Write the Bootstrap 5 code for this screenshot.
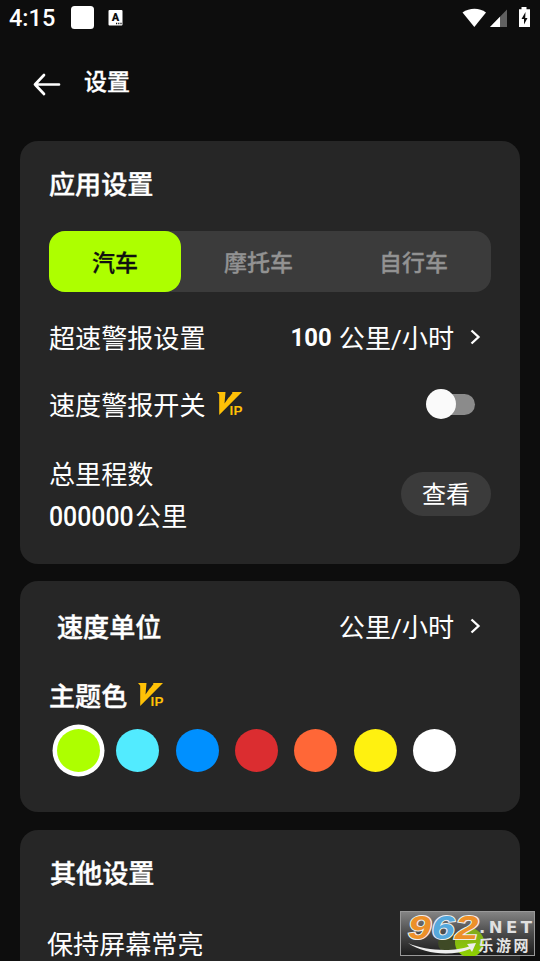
<!DOCTYPE html>
<html lang="zh-CN" data-bs-theme="dark">
<head>
<meta charset="utf-8">
<meta name="viewport" content="width=device-width, initial-scale=1">
<title>设置</title>
<link href="https://cdn.jsdelivr.net/npm/bootstrap@5.3.0/dist/css/bootstrap.min.css" rel="stylesheet">
<style>
body{width:540px;height:961px;background:#0d0d0d;color:#fff;font-family:"Noto Sans CJK SC",sans-serif;font-size:26.1px;line-height:30px}
.screen{width:540px;height:961px}
.statusbar{height:36px;padding:0 9px;flex:none}
.clock{font:500 23.5px/36px Roboto,sans-serif;width:62px}
.titlebar{height:105px;padding:28px 0 0 33px;flex:none}
.page-name{font-size:23px;font-weight:500;line-height:28px;margin:2px 0 0 23px;-webkit-text-stroke:.3px}
.panel{background:#262626;border-radius:18px;margin:0 20px 17px;padding:0 29px;flex:none}
.heavy{font-size:26.1px;line-height:30px;font-weight:500;-webkit-text-stroke:.4px}
.panel-app{height:423px}.panel-unit{height:231px;margin-bottom:18px}.panel-other{height:150px}
.panel-title{height:90px;padding-top:27px}
.vehicles{height:61px;background:#3b3b3b;border-radius:16px;font-size:23px}
.vehicles button{border:0;background:none;color:#929292;flex:1;border-radius:16px;padding:0 0 2px;line-height:30px;font-weight:500;-webkit-text-stroke:.3px}
.vehicles .chosen{background:#adff00;color:#101010;flex:0 0 132px}
.limit-row{height:60px;margin-top:15px}
.alarm-row{height:74px}
.total-row{height:88px;margin-top:9px}
.num{font-family:Roboto,sans-serif;line-height:20px}
.odo{display:inline-block;font-weight:500;font-size:27px;transform:scaleX(.92);transform-origin:left;margin-right:-6px}
.limit-num{font-weight:700;font-size:26.5px;transform:scaleX(.9);transform-origin:right;margin-right:7.5px}
.slash{font-family:Roboto,sans-serif;line-height:20px}
.chev{margin:0 10px 0 16px}
.vip{margin-left:11px}
.switch-off{width:49px;height:31px;margin-right:16px;position:relative}
.switch-off::before{content:"";position:absolute;left:8px;top:5px;width:41px;height:21px;border-radius:11px;background:#8b8b8b}
.switch-off::after{content:"";position:absolute;left:0;top:0;width:30px;height:30px;border-radius:50%;background:#fafafa}
.view-btn{width:90px;height:44px;border:0;background:#3b3b3b;color:#fff;font-size:24px;line-height:42px;padding:0 0 2px}
.unit-row{height:89px;padding-left:8px}
.theme-row{height:49px}
.swatches{gap:16.3px;padding-left:8.200px;height:62px}
.dot{width:43px;height:43px;border-radius:50%;flex:none}
.picked{box-shadow:0 0 0 4.5px #fff}
.c-lime{background:#adff00}.c-cyan{background:#52ebff}.c-blue{background:#0090ff}.c-red{background:#db2d30}.c-orange{background:#ff6737}.c-yellow{background:#fff110}.c-white{background:#fff}
.other-title{height:98px;padding:27px 0 0 1px}
.awake{margin-left:-2px}
.stamp{left:400px;top:911px;width:135px;height:45px}
</style>
<script src="https://cdn.jsdelivr.net/npm/bootstrap@5.3.0/dist/js/bootstrap.bundle.min.js"></script>
</head>
<body class="overflow-hidden">
<svg width="0" height="0" class="position-absolute">
<symbol id="vip" viewBox="0 0 26 24"><path d="M0 0H8.500L7.500 11.500L15.500 0H25L2.200 23V2.500Z" fill="#ffc107"/><path d="M15.500 1L14 0L11.500 6Z" fill="#262626"/><text x="12.4" y="22.700" font-family="Liberation Sans,sans-serif" font-size="13.500" font-weight="700" fill="#ffc107" textLength="13">IP</text></symbol>
</svg>
<main class="screen d-flex flex-column position-relative overflow-hidden">
<div class="statusbar d-flex align-items-center">
<span class="clock">4:15</span>
<svg width="54" height="24" viewBox="0 0 54 24"><rect width="23" height="23" rx="3.5" fill="#fff"/><rect x="37.500" y="4" width="14" height="15.500" rx="1" fill="#fff"/><text x="44.500" y="15" text-anchor="middle" font-family="Roboto,sans-serif" font-size="11" font-weight="900" fill="#0d0d0d">A</text><path d="M45 17.500h6" stroke="#0d0d0d" stroke-width="1.300" stroke-dasharray="1.200 1"/></svg>
<svg class="ms-auto" width="69" height="24" viewBox="462 6 69 24"><path d="M462.500 12.500C469.500 7.500 479.500 7.500 486 12.500L474.300 27Z" fill="#fff"/><path d="M507 9.500V27H490Z" fill="#606060"/><path d="M500 16.700V27H490Z" fill="#fff"/><path d="M521.500 7h5v2.200h3.500V27h-11V9.200h2.500Z" fill="#fff"/><path d="M525.500 12l-4 7h2.500v5.500l3.500-6.500h-2.300z" fill="#0d0d0d"/></svg>
</div>
<header class="titlebar d-flex align-items-start">
<svg width="28" height="40" viewBox="0 0 28 40" fill="none" stroke="#fff" stroke-width="2.700" stroke-linecap="round" stroke-linejoin="round"><path d="M26 20.500H2M11 11L2 20.500L11 30"/></svg>
<h1 class="page-name">设置</h1>
</header>
<section class="panel panel-app">
<h2 class="panel-title heavy mb-0">应用设置</h2>
<div class="vehicles d-flex"><button class="chosen">汽车</button><button>摩托车</button><button>自行车</button></div>
<div class="limit-row d-flex align-items-center"><span>超速警报设置</span><span class="num limit-num ms-auto">100</span><span>公里<span class="slash">/</span>小时</span><svg class="chev" width="11" height="16" viewBox="0 0 11 16" fill="none" stroke="#fff" stroke-width="2.300"><path d="M1.500 1.500L8.500 8L1.500 14.500"/></svg></div>
<div class="alarm-row d-flex align-items-center"><span>速度警报开关</span><svg class="vip" width="26" height="24"><use href="#vip"/></svg><span class="switch-off ms-auto"></span></div>
<div class="total-row d-flex align-items-center justify-content-between"><div><div class="mb-2 pb-1">总里程数</div><div><span class="num odo">000000</span>公里</div></div><button class="view-btn rounded-pill">查看</button></div>
</section>
<section class="panel panel-unit">
<div class="unit-row d-flex align-items-center"><span class="heavy">速度单位</span><span class="ms-auto">公里<span class="slash">/</span>小时</span><svg class="chev" width="11" height="16" viewBox="0 0 11 16" fill="none" stroke="#fff" stroke-width="2.300"><path d="M1.500 1.500L8.500 8L1.500 14.500"/></svg></div>
<div class="theme-row d-flex align-items-center"><span class="heavy">主题色</span><svg class="vip" width="26" height="24"><use href="#vip"/></svg></div>
<div class="swatches d-flex align-items-center"><span class="dot picked c-lime"></span><span class="dot c-cyan"></span><span class="dot c-blue"></span><span class="dot c-red"></span><span class="dot c-orange"></span><span class="dot c-yellow"></span><span class="dot c-white"></span></div>
</section>
<section class="panel panel-other">
<div class="other-title heavy">其他设置</div>
<div class="awake">保持屏幕常亮</div>
</section>
<svg class="stamp position-absolute" viewBox="0 0 135 45">
<defs><linearGradient id="plate" x2="0" y2="1"><stop stop-color="#858585"/><stop offset=".5" stop-color="#4a4a4a"/><stop offset="1" stop-color="#1c1c1c"/></linearGradient><linearGradient id="knob" x2="0" y2="1"><stop stop-color="#7fa51f"/><stop offset="1" stop-color="#8fd400"/></linearGradient></defs>
<rect x=".5" y=".5" width="134" height="44" fill="url(#plate)" stroke="#999"/>
<rect x="38" y="22" width="40" height="20" rx="10" fill="#3f4a26"/>
<circle cx="69.500" cy="31.500" r="14.500" fill="url(#knob)"/>
<g font-family="Liberation Sans,sans-serif" font-weight="700" font-style="italic" font-size="34" stroke="#eee" stroke-width="2" paint-order="stroke"><text x="8" y="27.500" fill="#ec9029" textLength="23" lengthAdjust="spacingAndGlyphs">9</text><text x="31.500" y="27.500" fill="#55a8dc" textLength="23" lengthAdjust="spacingAndGlyphs">6</text><text x="55" y="27.500" fill="#ec9029" textLength="23.500" lengthAdjust="spacingAndGlyphs">2</text></g>
<path d="M8 32C25 40 54 41 69 35.500L67 33L76 32L72 41L70 38C51 46 24 43 8 32Z" fill="#eee"/>
<text x="79" y="21.500" font-family="DejaVu Sans,sans-serif" font-weight="700" font-size="16.500" fill="#e0e0e0" textLength="53">.NET</text>
<text x="78.500" y="40" font-family="Noto Sans CJK SC,sans-serif" font-weight="700" font-size="15" fill="#e4e4e4" textLength="50">乐游网</text>
</svg>
</main>
</body>
</html>
